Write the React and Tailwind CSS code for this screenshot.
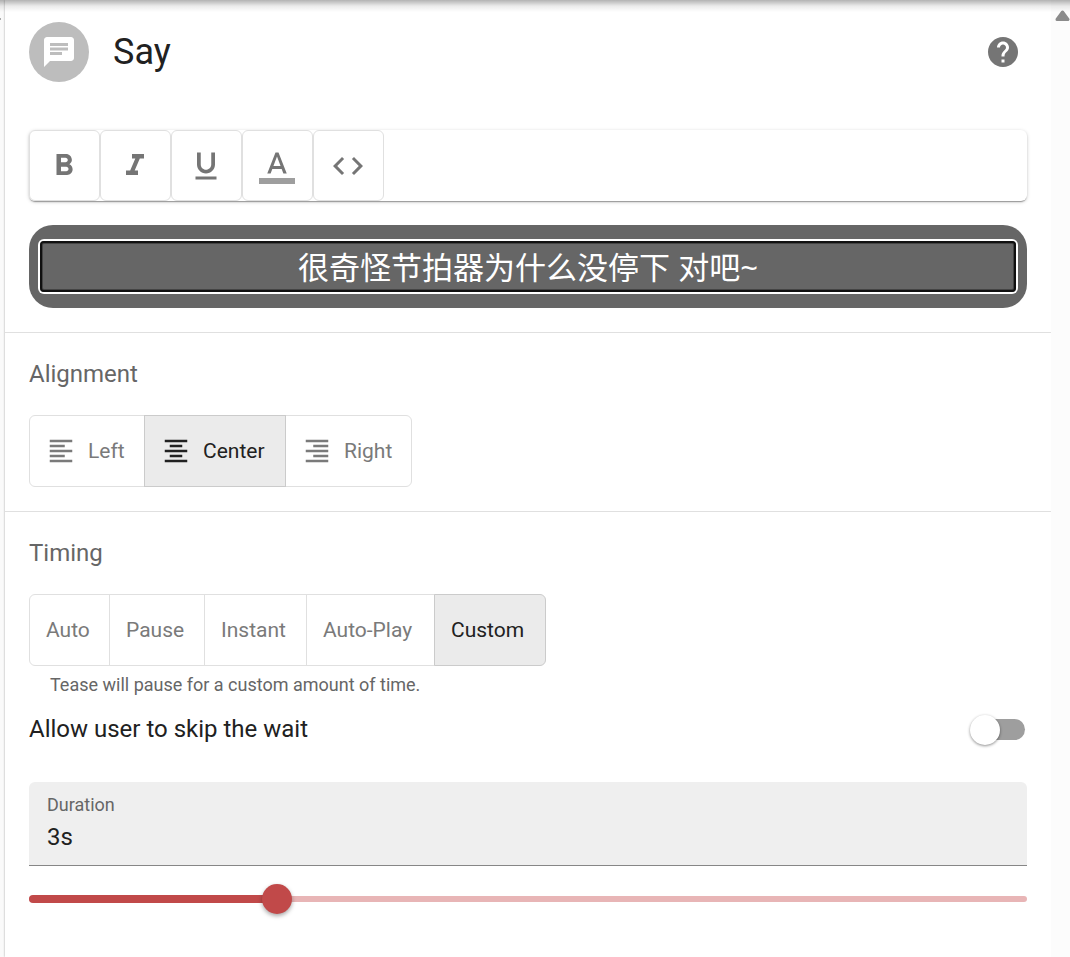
import { useState } from "react";

function Icon({ size = "size-9", children }) {
  return (
    <svg viewBox="0 0 24 24" className={`${size} shrink-0 fill-current`} aria-hidden="true">
      {children}
    </svg>
  );
}

const formats = [
  { name: "Bold", d: "M15.6 10.79c.97-.67 1.65-1.77 1.65-2.79 0-2.26-1.75-4-4-4H7v14h7.04c2.09 0 3.71-1.7 3.71-3.79 0-1.52-.86-2.82-2.15-3.42zM10 6.5h3c.83 0 1.5.67 1.5 1.5s-.67 1.5-1.5 1.5h-3v-3zm3.5 9H10v-3h3.5c.83 0 1.5.67 1.5 1.5s-.67 1.5-1.5 1.5z" },
  { name: "Italic", d: "M10 4v3h2.21l-3.42 8H6v3h8v-3h-2.21l3.42-8H18V4z" },
  { name: "Underline", d: "M12 17c3.31 0 6-2.69 6-6V3h-2.5v8c0 1.93-1.57 3.5-3.5 3.5S8.5 12.93 8.5 11V3H6v8c0 3.31 2.69 6 6 6zm-7 2v2h14v-2H5z" },
  { name: "Text color", d: "M11 3L5.5 17h2.25l1.12-3h6.25l1.12 3h2.25L13 3h-2zm-1.38 9L12 5.67 14.38 12H9.62z", bar: true },
  { name: "Code", d: "M9.4 16.6L4.8 12l4.6-4.6L8 6l-6 6 6 6 1.4-1.4zm5.2 0l4.6-4.6-4.6-4.6L16 6l6 6-6 6-1.4-1.4z" },
];

const alignments = [
  { name: "Left", width: "w-[116px]", d: "M15 15H3v2h12v-2zm0-8H3v2h12V7zM3 13h18v-2H3v2zm0 8h18v-2H3v2zM3 3v2h18V3H3z" },
  { name: "Center", width: "w-[142px]", d: "M7 15v2h10v-2H7zm-4 6h18v-2H3v2zm0-8h18v-2H3v2zm4-6v2h10V7H7zM3 3v2h18V3H3z" },
  { name: "Right", width: "w-[127px]", d: "M3 21h18v-2H3v2zm6-4h12v-2H9v2zm-6-4h18v-2H3v2zm6-4h12V7H9v2zM3 3v2h18V3H3z" },
];

const timings = [
  { name: "Auto", width: "w-[81px]" },
  { name: "Pause", width: "w-[96px]" },
  { name: "Instant", width: "w-[103px]" },
  { name: "Auto-Play", width: "w-[129px]" },
  { name: "Custom", width: "w-[112px]" },
];

function ToggleGroup({ label, options, value, onChange }) {
  return (
    <div role="group" aria-label={label} className="flex">
      {options.map((o) => (
        <button
          key={o.name}
          type="button"
          aria-pressed={value === o.name}
          onClick={() => onChange(o.name)}
          className={`${o.width} -ml-px flex h-[72px] items-center gap-3 border px-4 text-[21px] whitespace-nowrap first:ml-0 first:rounded-l-md last:rounded-r-md ${
            value === o.name
              ? "z-10 border-[#cbcbcb] bg-[#ebebeb] text-[#212121]"
              : "border-[#e0e0e0] text-[#7a7a7a]"
          }`}
        >
          {o.d && (
            <Icon size="size-[30px]">
              <path d={o.d} />
            </Icon>
          )}
          <span className="pt-0.5">{o.name}</span>
        </button>
      ))}
    </div>
  );
}

export default function App() {
  const [align, setAlign] = useState("Center");
  const [timing, setTiming] = useState("Custom");
  const [position, setPosition] = useState(24.8);

  return (
    <div className="relative flex min-h-screen bg-[#fafafa] font-[Roboto,'Noto_Sans_CJK_SC',sans-serif] text-[#212121]">
      <div className="pointer-events-none absolute inset-x-0 top-0 z-20 h-3 bg-linear-to-b from-black/30 via-black/8 to-transparent" />
      <div className="w-[5px] shrink-0 pt-[18px]">
        <div className="h-[2px] w-px bg-[#aaa]" />
      </div>

      <main className="min-w-0 grow bg-white shadow-[0_0_2px_rgba(0,0,0,0.35)]">
        <section className="border-b border-[#e0e0e0] px-6 pt-[22px] pb-6">
          <header className="flex items-center">
            <div className="flex size-[60px] items-center justify-center rounded-full bg-[#bdbdbd] text-white">
              <Icon>
                <path d="M20 2H4c-1.1 0-1.99.9-1.99 2L2 22l4-4h14c1.1 0 2-.9 2-2V4c0-1.1-.9-2-2-2zM6 9h12v2H6V9zm8 5H6v-2h8v2zm4-6H6V6h12v2z" />
              </Icon>
            </div>
            <h1 className="ml-6 grow text-4xl">Say</h1>
            <button type="button" aria-label="Help" className="mr-1.5 text-[#757575]">
              <Icon>
                <path d="M12 2C6.48 2 2 6.48 2 12s4.48 10 10 10 10-4.48 10-10S17.52 2 12 2zm1 17h-2v-2h2v2zm2.07-7.75l-.9.92C13.45 12.9 13 13.5 13 15h-2v-.5c0-1.1.45-2.1 1.17-2.83l1.24-1.26c.37-.36.59-.86.59-1.41 0-1.1-.9-2-2-2s-2 .9-2 2H8c0-2.21 1.79-4 4-4s4 1.79 4 4c0 .88-.36 1.68-.93 2.25z" />
              </Icon>
            </button>
          </header>

          <div
            role="toolbar"
            aria-label="Text format"
            className="mt-12 flex rounded-md shadow-[0_2px_1px_-1px_rgba(0,0,0,0.25),0_1px_2px_rgba(0,0,0,0.16),0_1px_4px_rgba(0,0,0,0.14)]"
          >
            {formats.map((f) => (
              <button
                key={f.name}
                type="button"
                aria-label={f.name}
                className="flex h-[71px] w-[71px] items-center justify-center rounded-md border border-[#e0e0e0] pr-0.5 text-[#757575]"
              >
                <Icon>
                  <path d={f.d} />
                  {f.bar && <path fill="#9e9e9e" d="M0 20h24v4H0z" />}
                </Icon>
              </button>
            ))}
          </div>

          <div className="mt-6 rounded-3xl bg-[#666] px-[11px] py-4">
            <input
              type="text"
              aria-label="Message"
              defaultValue="很奇怪节拍器为什么没停下 对吧~"
              className="block h-[51px] w-full rounded-sm border-2 border-[#101010] pb-0.5 text-center font-['Noto_Sans','Noto_Sans_CJK_SC',sans-serif] text-[31px] text-white shadow-[0_0_0_2px_#fff,inset_0_0_0_1px_#444] outline-none"
            />
          </div>
        </section>

        <section className="border-b border-[#e0e0e0] px-6 pt-6 pb-6">
          <h2 className="mb-6 text-2xl/[34px] text-[#666]">Alignment</h2>
          <ToggleGroup label="Alignment" options={alignments} value={align} onChange={setAlign} />
        </section>

        <section className="px-6 pt-6">
          <h2 className="mb-6 text-2xl/[34px] text-[#666]">Timing</h2>
          <ToggleGroup label="Timing" options={timings} value={timing} onChange={setTiming} />
          <p className="mt-1 px-[21px] text-lg/[30px] text-[#666]">Tease will pause for a custom amount of time.</p>

          <label className="mt-1.5 flex h-[46px] items-center justify-between text-2xl">
            Allow user to skip the wait
            <input
              type="checkbox"
              role="switch"
              className="relative mr-0.5 h-[21px] w-[51px] appearance-none rounded-full bg-[#9e9e9e] before:absolute before:-top-1 before:-left-1 before:size-[30px] before:rounded-full before:bg-white before:shadow-[0_1px_3px_rgba(0,0,0,0.45)] checked:bg-[#e8b5b6] checked:before:left-6 checked:before:bg-[#c14949]"
            />
          </label>

          <div className="mt-[30px] flex h-[84px] flex-col justify-center rounded-t-md border-b border-[#868686] bg-[#efefef] px-[18px] pb-0.5">
            <label htmlFor="duration" className="text-lg/7 text-[#666]">
              Duration
            </label>
            <input id="duration" type="text" defaultValue="3s" className="h-9 w-full text-2xl outline-none" />
          </div>

          <div className="mt-[18px] grid items-center">
            <div className="col-start-1 row-start-1 h-1.5 rounded-full bg-[#e8b5b6]" />
            <div className="col-start-1 row-start-1 h-2 rounded-full bg-[#c14949]" style={{ width: `${position}%` }} />
            <input
              type="range"
              aria-label="Duration slider"
              min="0"
              max="100"
              step="0.1"
              value={position}
              onChange={(e) => setPosition(Number(e.target.value))}
              className="z-10 col-start-1 row-start-1 -mx-[15px] h-[30px] appearance-none bg-transparent [&::-webkit-slider-thumb]:size-[30px] [&::-webkit-slider-thumb]:appearance-none [&::-webkit-slider-thumb]:rounded-full [&::-webkit-slider-thumb]:bg-[#c14949] [&::-webkit-slider-thumb]:shadow-[0_2px_4px_rgba(0,0,0,0.35)]"
            />
          </div>
        </section>
      </main>

      <div className="flex w-[19px] shrink-0 justify-end bg-[#fcfcfc] pt-2.5">
        <svg viewBox="0 0 15 12" className="h-3 w-[15px]" aria-hidden="true">
          <path d="M7.5 2L13 9.5H2z" fill="#8b8b8b" stroke="#8b8b8b" strokeWidth="3" strokeLinejoin="round" />
        </svg>
      </div>
    </div>
  );
}
